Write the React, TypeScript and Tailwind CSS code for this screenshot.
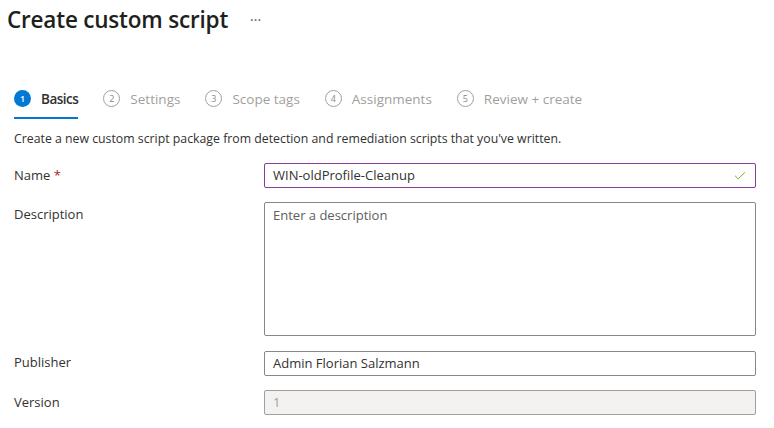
import React from "react";
import { Check } from "lucide-react";

const steps = [
  { n: 1, label: "Basics" },
  { n: 2, label: "Settings" },
  { n: 3, label: "Scope tags" },
  { n: 4, label: "Assignments" },
  { n: 5, label: "Review + create" },
];

const font = { fontFamily: '"Open Sans", "Noto Sans", sans-serif' };

const Field: React.FC<{ label: string; required?: boolean; children: React.ReactNode }> = ({
  label,
  required,
  children,
}) => (
  <div className="flex items-start">
    <div className="w-[250px] pt-[3px] text-[13px] text-[#323130]">
      {label}
      {required && <span className="text-[#a4262c]"> *</span>}
    </div>
    <div className="w-[492px]">{children}</div>
  </div>
);

const App: React.FC = () => {
  return (
    <div className="w-[774px] h-[428px] bg-white overflow-hidden" style={font}>
      <div className="flex items-center pl-[7px] pt-[2px] h-[38px]">
        <h1 className="text-[22.5px] font-semibold text-[#201f1e] tracking-[-0.2px]">Create custom script</h1>
        <span className="ml-[22px] text-[14px] text-[#605e5c] -mt-[2px]">···</span>
      </div>

      <div className="flex pl-[14px] mt-[43px] gap-[25px]">
        {steps.map((s) => {
          const active = s.n === 1;
          return (
            <div key={s.n} className={`flex items-start pt-[8px] gap-[10px] h-[38px] border-b-2 ${active ? "border-[#0078d4]" : "border-transparent"}`}>
              <div
                className={`mt-[1px] w-[17px] h-[17px] rounded-full flex items-center justify-center text-[9px] ${
                  active ? "bg-[#0078d4] text-white font-semibold" : "border border-[#a19f9d] text-[#8a8886]"
                }`}
              >
                {s.n}
              </div>
              <span className={`text-[13.5px] ${active ? "text-[#323130] font-semibold tracking-[-0.5px]" : "text-[#a19f9d]"}`}>{s.label}</span>
            </div>
          );
        })}
      </div>

      <div className="px-[14px] mt-[11px]">
        <p className="text-[12.3px] text-[#323130]">
          Create a new custom script package from detection and remediation scripts that you've written.
        </p>

        <div className="mt-[15px] flex flex-col gap-[14px]">
          <Field label="Name" required>
            <div className="h-[25px] border border-[#8a3a9c] rounded-[2px] flex items-center px-[8px] text-[13px] text-[#323130]">
              <span className="flex-1">WIN-oldProfile-Cleanup</span>
              <Check size={14} className="text-[#57a300]" strokeWidth={1.5} />
            </div>
          </Field>
          <Field label="Description">
            <div className="h-[134px] border border-[#8a8886] rounded-[2px] px-[8px] pt-[3px] text-[13px] text-[#605e5c]">
              Enter a description
            </div>
          </Field>
          <Field label="Publisher">
            <div className="mt-[1px] h-[25px] border border-[#8a8886] rounded-[2px] flex items-center px-[8px] text-[13px] text-[#323130]">
              Admin Florian Salzmann
            </div>
          </Field>
          <Field label="Version">
            <div className="h-[25px] border border-[#a19f9d] bg-[#f3f2f1] rounded-[2px] flex items-center px-[8px] text-[13px] text-[#a19f9d]">
              1
            </div>
          </Field>
        </div>
      </div>
    </div>
  );
};

export default App;
